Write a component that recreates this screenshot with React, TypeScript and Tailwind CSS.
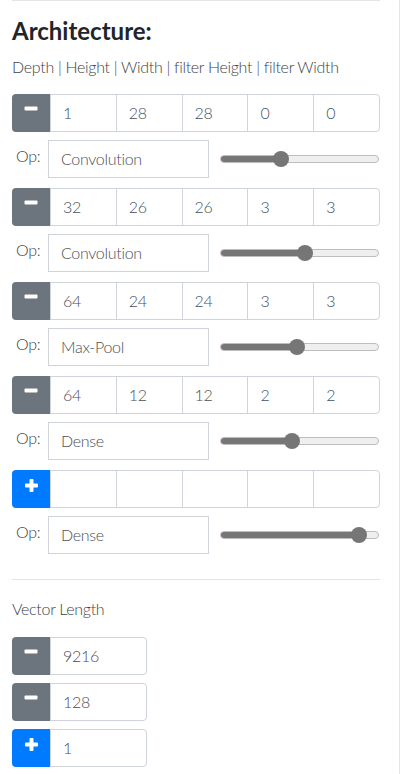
import React from 'react';

const layers = [
  { values: ['1', '28', '28', '0', '0'], op: 'Convolution', level: 0.37, removable: true },
  { values: ['32', '26', '26', '3', '3'], op: 'Convolution', level: 0.54, removable: true },
  { values: ['64', '24', '24', '3', '3'], op: 'Max-Pool', level: 0.48, removable: true },
  { values: ['64', '12', '12', '2', '2'], op: 'Dense', level: 0.45, removable: true },
  { values: ['', '', '', '', ''], op: 'Dense', level: 0.915, removable: false },
];

const vectors = [
  { value: '9216', removable: true },
  { value: '128', removable: true },
  { value: '1', removable: false },
];

function MinusIcon() {
  return (
    <svg width="14" height="5" viewBox="0 0 14 5" className="-mt-[9px]">
      <rect x="0.5" y="0.5" width="13" height="4" rx="1" fill="#fff" />
    </svg>
  );
}

function PlusIcon() {
  return (
    <svg width="13" height="13" viewBox="0 0 13 13" className="-mt-[8px]">
      <rect x="4.5" y="0" width="4" height="13" rx="1" fill="#fff" />
      <rect x="0" y="4.5" width="13" height="4" rx="1" fill="#fff" />
    </svg>
  );
}

function SideButton({ removable }: { removable: boolean }) {
  return (
    <button
      className={`w-[38px] shrink-0 h-full rounded-l-[4px] flex items-center justify-center ${
        removable ? 'bg-[#6c757d]' : 'bg-[#007bff]'
      }`}
    >
      {removable ? <MinusIcon /> : <PlusIcon />}
    </button>
  );
}

function Slider({ level }: { level: number }) {
  return (
    <div className="relative w-[159px] h-[16px] flex items-center">
      <div className="w-full h-[8px] rounded-full bg-[#efefef] border border-[#bdbdbd] overflow-hidden">
        <div className="h-full bg-[#767676]" style={{ width: `${level * 100}%` }} />
      </div>
      <div
        className="absolute top-0 w-[16px] h-[16px] rounded-full bg-[#767676]"
        style={{ left: `${level * 143}px` }}
      />
    </div>
  );
}

function LayerRow({ values, removable }: { values: string[]; removable: boolean }) {
  return (
    <div className="flex h-[38px]">
      <SideButton removable={removable} />
      {values.map((v, i) => (
        <div
          key={i}
          className={`flex-1 border border-[#ced4da] px-3 flex items-center text-[#495057] ${
            i > 0 ? '-ml-px' : ''
          } ${i === values.length - 1 ? 'rounded-r-[4px]' : ''}`}
        >
          {v}
        </div>
      ))}
    </div>
  );
}

export default function App() {
  return (
    <div
      className="min-h-screen bg-white text-[16px] leading-6 font-light tracking-[-0.3px] text-[#3d4246]"
      style={{ fontFamily: 'Lato, "Open Sans", Arial, sans-serif' }}
    >
      <div className="w-[400px] min-h-[774px] border-r border-[#e4e4e4] pl-3 pr-[19px]">
        <hr className="border-0 border-t border-[#e5e5e5]" />

        <h4 className="mt-[15px] text-[24px] leading-[29px] font-bold tracking-normal text-[#212529]">
          Architecture:
        </h4>
        <p className="mt-[10px] whitespace-nowrap">
          Depth | Height | Width | filter Height | filter Width
        </p>

        <div className="mt-[15px] flex flex-col">
          {layers.map((layer, idx) => (
            <div key={idx} className={idx > 0 ? 'mt-[10px]' : ''}>
              <LayerRow values={layer.values} removable={layer.removable} />
              <div className="mt-[8px] flex items-start">
                <span className="ml-1 w-[32px] mt-[4px]">Op:</span>
                <div className="w-[161px] h-[38px] border border-[#ced4da] px-3 flex items-center text-[#495057]">
                  {layer.op}
                </div>
                <div className="ml-[11px] h-[38px] flex items-center">
                  <Slider level={layer.level} />
                </div>
              </div>
            </div>
          ))}
        </div>

        <hr className="mt-[25px] border-0 border-t border-[#e5e5e5]" />

        <p className="mt-[17px]">Vector Length</p>

        <div className="mt-[16px] flex flex-col gap-[8px]">
          {vectors.map((v, i) => (
            <div key={i} className="flex h-[38px] w-[135px]">
              <SideButton removable={v.removable} />
              <div className="flex-1 border border-[#ced4da] rounded-r-[4px] px-3 flex items-center text-[#495057]">
                {v.value}
              </div>
            </div>
          ))}
        </div>
      </div>
    </div>
  );
}
